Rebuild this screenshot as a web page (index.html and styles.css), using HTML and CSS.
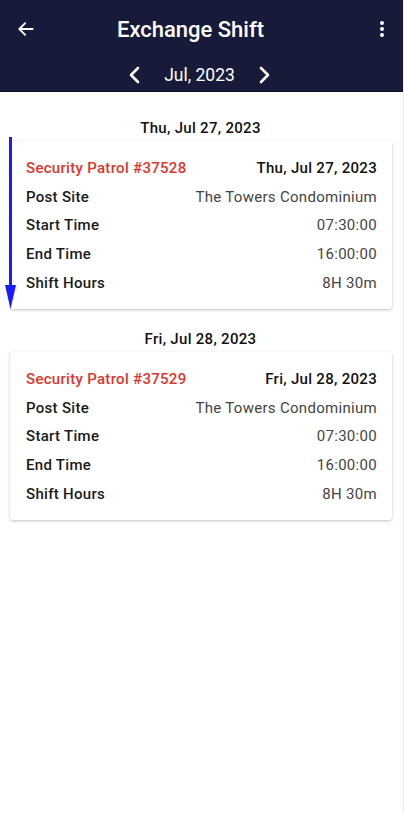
FILE: index.html
```html
<!DOCTYPE html>
<html lang="en">
<head>
    <meta charset="UTF-8">
    <meta name="viewport" content="width=device-width, initial-scale=1.0">
    <title>Exchange Shift</title>
    <link rel="stylesheet" href="styles.css">
</head>
<body>
    <div class="app">
        <!-- Top bar -->
        <header class="topbar">
            <div class="title-row">
                <button class="icon-btn back">
                    <svg width="20" height="20" viewBox="0 0 24 24"><path d="M20 12H5M11 5l-7 7 7 7" fill="none" stroke="#fff" stroke-width="2.2" stroke-linecap="round" stroke-linejoin="round"/></svg>
                </button>
                <h1>Exchange Shift</h1>
                <button class="icon-btn more">
                    <svg width="6" height="18" viewBox="0 0 6 18"><circle cx="3" cy="3" r="2" fill="#fff"/><circle cx="3" cy="9" r="2" fill="#fff"/><circle cx="3" cy="15" r="2" fill="#fff"/></svg>
                </button>
            </div>
            <div class="month-row">
                <button class="icon-btn">
                    <svg width="14" height="20" viewBox="0 0 14 20"><path d="M10 3L3 10l7 7" fill="none" stroke="#fff" stroke-width="2.6" stroke-linecap="round" stroke-linejoin="round"/></svg>
                </button>
                <span class="month">Jul, 2023</span>
                <button class="icon-btn">
                    <svg width="14" height="20" viewBox="0 0 14 20"><path d="M4 3l7 7-7 7" fill="none" stroke="#fff" stroke-width="2.6" stroke-linecap="round" stroke-linejoin="round"/></svg>
                </button>
            </div>
        </header>

        <main class="list">
            <section class="day">
                <h2 class="day-title">Thu, Jul 27, 2023</h2>
                <div class="card">
                    <div class="row">
                        <span class="shift-name">Security Patrol #37528</span>
                        <span class="shift-date">Thu, Jul 27, 2023</span>
                    </div>
                    <div class="row"><span class="label">Post Site</span><span class="value">The Towers Condominium</span></div>
                    <div class="row"><span class="label">Start Time</span><span class="value">07:30:00</span></div>
                    <div class="row"><span class="label">End Time</span><span class="value">16:00:00</span></div>
                    <div class="row"><span class="label">Shift Hours</span><span class="value">8H 30m</span></div>
                </div>
            </section>

            <section class="day">
                <h2 class="day-title">Fri, Jul 28, 2023</h2>
                <div class="card">
                    <div class="row">
                        <span class="shift-name">Security Patrol #37529</span>
                        <span class="shift-date">Fri, Jul 28, 2023</span>
                    </div>
                    <div class="row"><span class="label">Post Site</span><span class="value">The Towers Condominium</span></div>
                    <div class="row"><span class="label">Start Time</span><span class="value">07:30:00</span></div>
                    <div class="row"><span class="label">End Time</span><span class="value">16:00:00</span></div>
                    <div class="row"><span class="label">Shift Hours</span><span class="value">8H 30m</span></div>
                </div>
            </section>
        </main>

        <!-- scroll hint arrow drawn over the first card -->
        <svg class="scroll-arrow" width="14" height="174" viewBox="0 0 14 174"><path d="M6.5 0V150" stroke="#1a1aff" stroke-width="3"/><path d="M1 148h11l-5.5 24z" fill="#1a1aff"/></svg>
    </div>
</body>
</html>
```

FILE: styles.css
```css
* {
    margin: 0;
    padding: 0;
    box-sizing: border-box;
    font-family: Roboto, "Liberation Sans", sans-serif;
}

body {
    background: #fff;
    width: 404px;
    height: 814px;
    overflow: hidden;
}

.app {
    position: relative;
    height: 100%;
    border-right: 1px solid #ececec;
}

.topbar {
    background: #181a3a;
    height: 92px;
    border-bottom: 1px solid #0d0e22;
    color: #fff;
}

.icon-btn {
    background: none;
    border: none;
    display: flex;
    align-items: center;
    justify-content: center;
    cursor: pointer;
}

.title-row {
    display: flex;
    align-items: center;
    justify-content: space-between;
    height: 58px;
    padding: 0 16px 0 14px;
}

.title-row h1 {
    flex: 1;
    text-align: center;
    font-size: 22px;
    font-weight: 500;
    padding-right: 34px;
}

.back {
    width: 24px;
    height: 24px;
}

.more {
    width: 10px;
    height: 24px;
}

.month-row {
    display: flex;
    align-items: center;
    justify-content: center;
    gap: 14px;
    height: 34px;
    padding-right: 4px;
}

.month {
    font-size: 17.5px;
    padding: 0 8px;
}

.list {
    padding: 27px 10px 0 10px;
}

.day-title {
    text-align: center;
    font-size: 15px;
    font-weight: 500;
    color: #111;
    letter-spacing: 0.3px;
    margin-bottom: 4px;
    margin-right: 2px;
}

.card {
    background: #fff;
    border-radius: 3px;
    box-shadow: 0 1px 3px rgba(0, 0, 0, 0.25);
    padding: 13px 15px 12px 16px;
    margin-bottom: 21px;
    margin-right: 1px;
}

.row {
    display: flex;
    justify-content: space-between;
    align-items: center;
    height: 28.6px;
    font-size: 15px;
    letter-spacing: 0.3px;
}

.shift-name {
    color: #e0352b;
    font-weight: 500;
}

.shift-date {
    color: #111;
    font-weight: 500;
}

.label {
    color: #1a1a1a;
    font-weight: 500;
}

.value {
    color: #444;
}

.scroll-arrow {
    position: absolute;
    left: 4px;
    top: 137px;
}
```
